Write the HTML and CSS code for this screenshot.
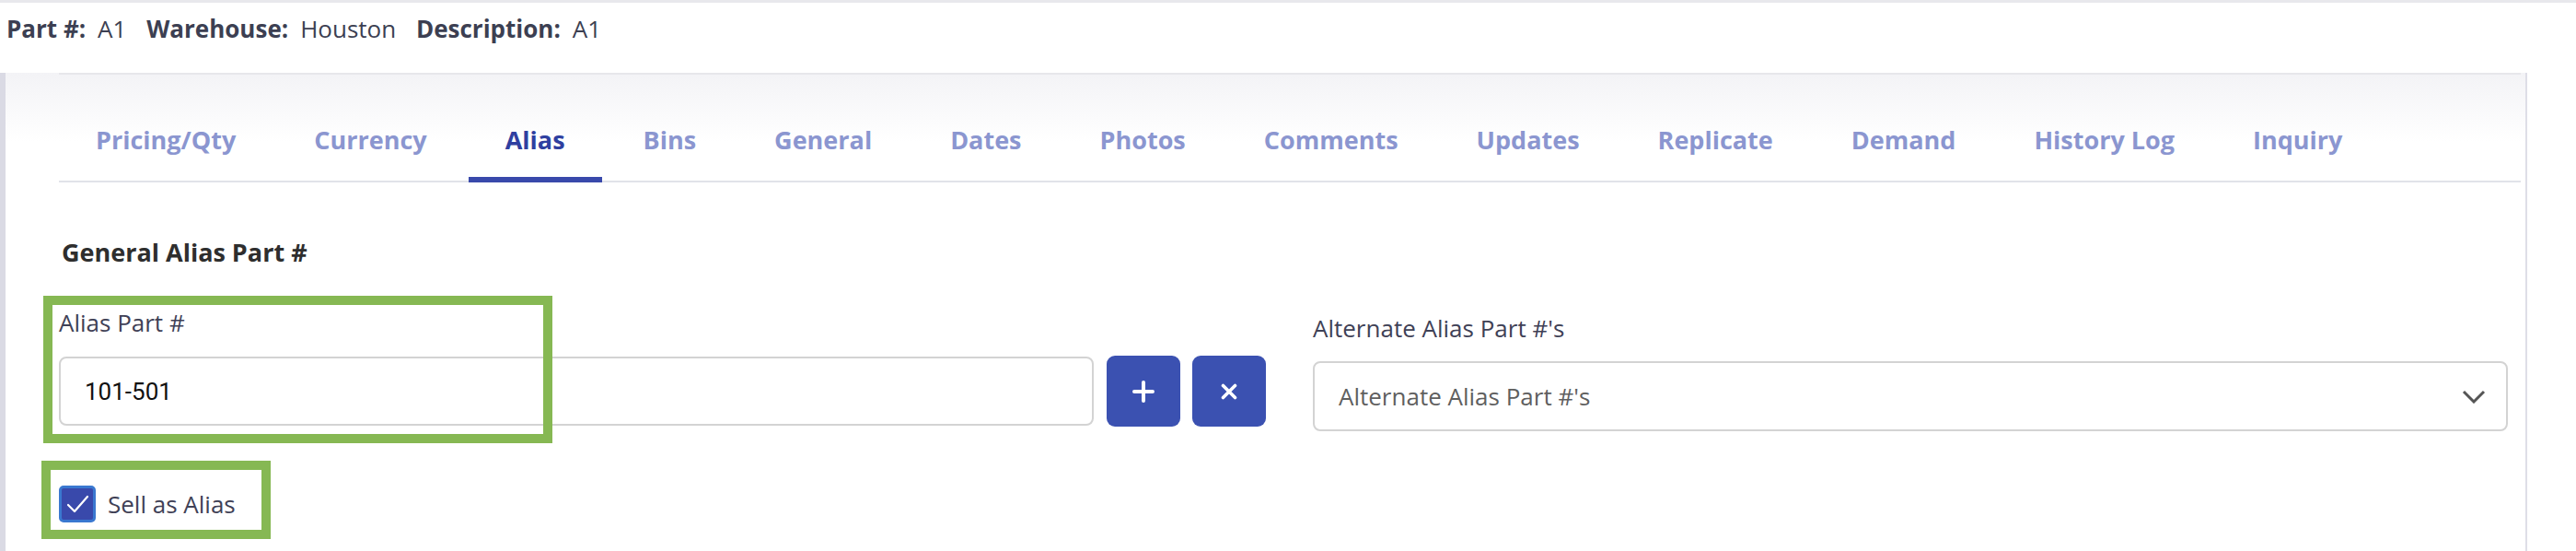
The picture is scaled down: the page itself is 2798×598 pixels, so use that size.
FILE: index.html
```html
<!DOCTYPE html>
<html>
<head>
<meta charset="utf-8">
<link rel="stylesheet" href="styles.css">
</head>
<body>
<header class="partbar">
  <span class="k">Part #:</span><span class="v">A1</span>
  <span class="k">Warehouse:</span><span class="v">Houston</span>
  <span class="k">Description:</span><span class="v">A1</span>
</header>
<main class="shell">
  <div class="card">
    <nav class="tabs">
      <a class="tab">Pricing/Qty</a>
      <a class="tab">Currency</a>
      <a class="tab active">Alias</a>
      <a class="tab">Bins</a>
      <a class="tab">General</a>
      <a class="tab">Dates</a>
      <a class="tab">Photos</a>
      <a class="tab">Comments</a>
      <a class="tab">Updates</a>
      <a class="tab">Replicate</a>
      <a class="tab">Demand</a>
      <a class="tab">History Log</a>
      <a class="tab">Inquiry</a>
    </nav>
    <section class="alias">
      <h3 class="heading">General Alias Part #</h3>
      <div class="cols">
        <div class="col">
          <div class="label">Alias Part #</div>
          <div class="inputrow">
            <div class="input">101-501</div>
            <button class="btn" type="button">
              <svg width="24" height="24" viewBox="0 0 24 24"><path d="M12 2v20M2 12h20" stroke="#fff" stroke-width="4" stroke-linecap="round" fill="none"/></svg>
            </button>
            <button class="btn" type="button">
              <svg width="18" height="18" viewBox="0 0 18 18"><path d="M2.5 2.5l13 13M15.5 2.5l-13 13" stroke="#fff" stroke-width="3.6" stroke-linecap="round" fill="none"/></svg>
            </button>
          </div>
        </div>
        <div class="col right">
          <div class="label">Alternate Alias Part #'s</div>
          <div class="select">
            <span>Alternate Alias Part #'s</span>
            <svg width="26" height="16" viewBox="0 0 26 16"><path d="M2 3l11 11L24 3" stroke="#555" stroke-width="3" fill="none"/></svg>
          </div>
        </div>
      </div>
      <label class="check">
        <span class="box"><svg width="30" height="30" viewBox="0 0 30 30"><path d="M5 16l7 7L26 7" stroke="#fff" stroke-width="2.2" fill="none" stroke-linecap="round" stroke-linejoin="round"/></svg></span>
        <span>Sell as Alias</span>
      </label>
    </section>
    <div class="mark mark-input"></div>
    <div class="mark mark-check"></div>
  </div>
</main>
</body>
</html>
```

FILE: styles.css
```css
html, body {
  margin: 0;
  padding: 0;
  background: #fff;
}
body {
  width: 2798px;
  height: 598px;
  overflow: hidden;
  font-family: "Open Sans", "Noto Sans", sans-serif;
}
.partbar {
  box-sizing: border-box;
  height: 79px;
  border-top: 3px solid #e8e8ec;
  padding: 11px 0 0 7px;
  font-size: 26px;
  line-height: 34px;
  color: #3c3f52;
  white-space: nowrap;
}
.partbar .k {
  font-weight: 700;
  margin-right: 13px;
}
.partbar .v {
  font-weight: 400;
  margin-right: 15px;
}
.shell {
  box-sizing: border-box;
  width: 2745px;
  height: 519px;
  border-left: 6px solid #dadae4;
  border-right: 2px solid #dedee7;
  background: linear-gradient(#f3f3f6 0, #ffffff 75px);
  padding: 0 5px 0 58px;
}
.card {
  position: relative;
  border-top: 2px solid #e7e7eb;
}
.tabs {
  display: flex;
  gap: 5px;
  border-bottom: 2px solid #e1e3e9;
}
.tab {
  display: block;
  padding: 54px 40px 23px;
  margin-bottom: -2px;
  border-bottom: 6px solid transparent;
  font-size: 27px;
  line-height: 34px;
  font-weight: 700;
  color: #8b96d0;
  white-space: nowrap;
}
.tab.active {
  color: #2f3fa0;
  border-bottom-color: #3949ab;
}
.alias {
  padding-top: 59px;
}
.heading {
  margin: 0 0 43px 3px;
  font-size: 27px;
  line-height: 34px;
  font-weight: 700;
  color: #2e2e2e;
}
.cols {
  display: grid;
  grid-template-columns: 1311px 1298px;
  column-gap: 51px;
}
.col.right {
  padding-top: 6px;
}
.label {
  font-size: 26px;
  line-height: 33px;
  color: #3f4156;
  margin-bottom: 19px;
}
.inputrow {
  display: flex;
  align-items: center;
  gap: 13px;
}
.input {
  box-sizing: border-box;
  width: 1124px;
  height: 75px;
  border: 2px solid #d3d3d3;
  border-radius: 8px;
  padding: 0 26px;
  display: flex;
  align-items: center;
  font-family: Roboto, "Liberation Sans", sans-serif;
  font-size: 26px;
  color: #111;
  margin-right: 1px;
}
.btn {
  width: 80px;
  height: 77px;
  border: 0;
  border-radius: 9px;
  background: #3b51b1;
  display: flex;
  align-items: center;
  justify-content: center;
  padding: 0;
}
.select {
  box-sizing: border-box;
  height: 76px;
  border: 2px solid #d3d3d3;
  border-radius: 8px;
  padding: 0 22px 0 26px;
  display: flex;
  align-items: center;
  justify-content: space-between;
  font-size: 26px;
  color: #5f5f5f;
}
.check {
  display: flex;
  align-items: center;
  gap: 13px;
  margin-top: 59px;
  font-size: 26px;
  color: #3f4156;
}
.box {
  box-sizing: border-box;
  width: 40px;
  height: 40px;
  border: 3px solid #3a78d0;
  border-radius: 5px;
  background: #3949ab;
  display: flex;
  align-items: center;
  justify-content: center;
}
.mark {
  position: absolute;
  box-sizing: border-box;
  border: 10px solid #86b853;
  pointer-events: none;
}
.mark-input {
  left: -17px;
  top: 240px;
  width: 553px;
  height: 160px;
}
.mark-check {
  left: -19px;
  top: 419px;
  width: 249px;
  height: 85px;
}
```
